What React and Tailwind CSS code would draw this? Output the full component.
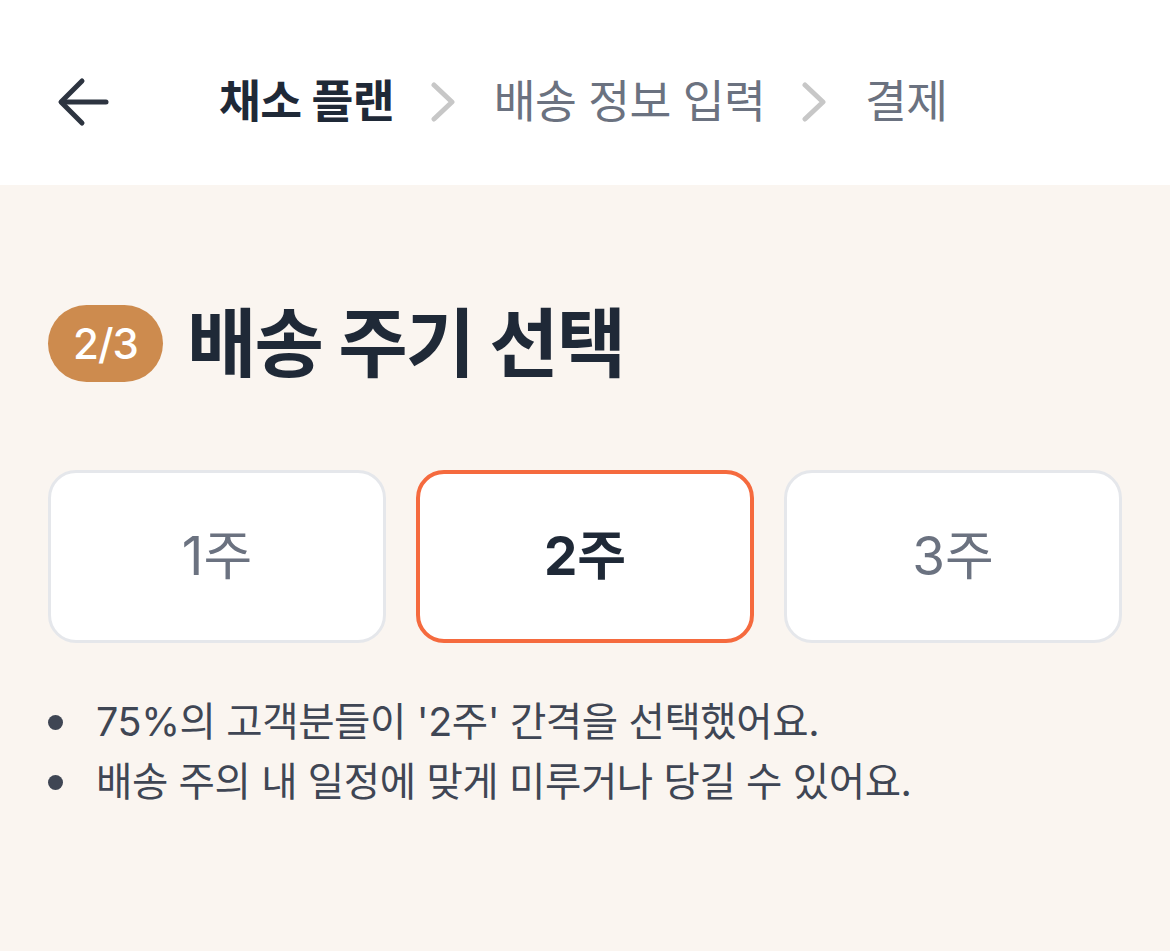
import React, { useState } from 'react';

const font = { fontFamily: '"Inter", "Noto Sans CJK KR", sans-serif' };

function Chevron() {
  return (
    <svg width="26" height="40" viewBox="0 0 26 40" fill="none" className="shrink-0">
      <path d="M3 3 L21 20 L3 37" stroke="#c7c7c7" strokeWidth="5" strokeLinecap="round" strokeLinejoin="round" />
    </svg>
  );
}

function Header() {
  return (
    <header className="h-[185px] bg-white flex items-center pl-[56px] pt-[18px]">
      <button type="button" className="w-[56px] h-[56px] flex items-center justify-center">
        <svg width="56" height="56" viewBox="0 0 56 56" fill="none">
          <path d="M50 28 H6" stroke="#2d3440" strokeWidth="5" strokeLinecap="round" />
          <path d="M26 7 L5 28 L26 49" stroke="#2d3440" strokeWidth="5" strokeLinecap="round" strokeLinejoin="round" />
        </svg>
      </button>
      <nav className="flex items-center gap-[37px] ml-[107px] text-[45.5px] leading-none tracking-[-0.015em]">
        <span className="font-bold text-[#1f2937]">채소 플랜</span>
        <Chevron />
        <span className="text-[#6b7280]">배송 정보 입력</span>
        <Chevron />
        <span className="text-[#6b7280]">결제</span>
      </nav>
    </header>
  );
}

export default function App() {
  const [cycle, setCycle] = useState(2);
  const options = [1, 2, 3];

  return (
    <div className="min-h-[951px] bg-[#faf5f0]" style={font}>
      <Header />
      <main className="px-[48px] pt-[120px]">
        <div className="flex items-center gap-[24px]">
          <span className="h-[77px] w-[115px] rounded-full bg-[#cd8b4e] text-white text-[42px] font-medium flex items-center justify-center tracking-[-0.02em]">
            2/3
          </span>
          <h1 className="text-[75.5px] font-bold text-[#1f2937] leading-none tracking-[-0.025em]">배송 주기 선택</h1>
        </div>

        <div className="grid grid-cols-3 gap-[30px] mt-[88px]">
          {options.map((n) => (
            <button
              key={n}
              type="button"
              onClick={() => setCycle(n)}
              className={
                cycle === n
                  ? 'h-[173px] rounded-[28px] bg-white border-[4px] border-[#f56a3e] text-[53px] font-bold text-[#1f2937]'
                  : 'h-[173px] rounded-[28px] bg-white border-[3px] border-[#e5e7eb] text-[53px] text-[#6b7280]'
              }
            >
              {n}주
            </button>
          ))}
        </div>

        <ul className="mt-[49px] text-[39.5px] leading-[60px] text-[#3f4654] tracking-[-0.01em]">
          <li className="flex items-center gap-[33px]">
            <span className="w-[15px] h-[15px] rounded-full bg-[#3f4654] shrink-0" />
            75%의 고객분들이 '2주' 간격을 선택했어요.
          </li>
          <li className="flex items-center gap-[33px]">
            <span className="w-[15px] h-[15px] rounded-full bg-[#3f4654] shrink-0" />
            배송 주의 내 일정에 맞게 미루거나 당길 수 있어요.
          </li>
        </ul>
      </main>
    </div>
  );
}
